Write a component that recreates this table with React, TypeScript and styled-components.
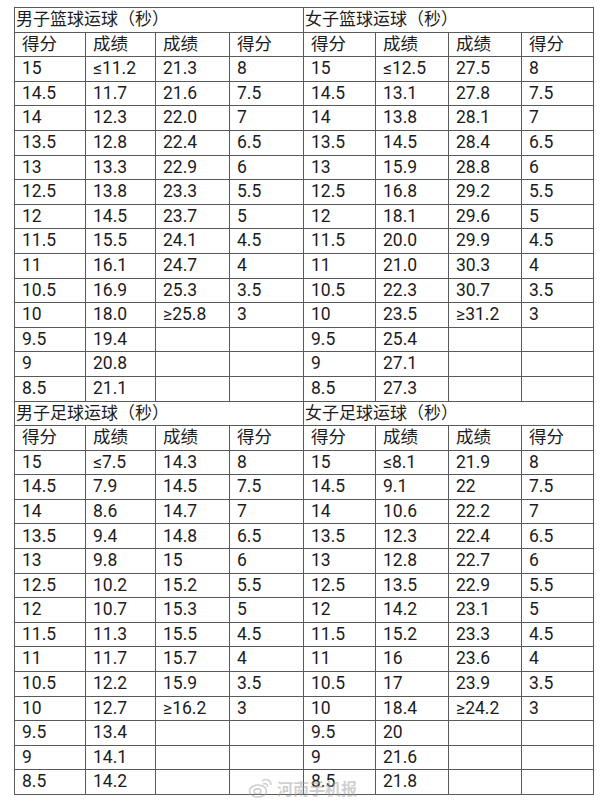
import * as React from "react";
import styled, { createGlobalStyle } from "styled-components";

const GlobalStyle = createGlobalStyle`
    html, body {
        margin: 0;
        padding: 0;
        background: #ffffff;
    }
    body {
        font-family: Roboto, "Noto Sans CJK SC", "Noto Sans", sans-serif;
        color: #1c1c1c;
    }
`;

const Page = styled.div`
    position: relative;
    width: 600px;
    height: 804px;
    padding: 7px 0 0 14px;
    box-sizing: border-box;
`;

const Table = styled.table`
    border-collapse: collapse;
    table-layout: fixed;
    width: 579px;
    border: 1px solid #7a7a7a;
`;

const Row = styled.tr`
    height: 24.6px;
`;

const Title = styled.td`
    border: 1px solid #5a5a5a;
    padding: 0 0 0 1px;
    font-size: 17px;
    line-height: 1;
    white-space: nowrap;
`;

const Cell = styled.td`
    border: 1px solid #5a5a5a;
    padding: 0 0 0 7px;
    font-size: 17.5px;
    line-height: 1;
    white-space: nowrap;
`;

const Watermark = styled.div`
    position: absolute;
    left: 248px;
    top: 776px;
    display: flex;
    align-items: center;
    gap: 3px;
    color: rgba(160, 160, 160, 0.5);
    font-size: 16px;
    font-weight: 700;
    pointer-events: none;
`;

type Section = {
    left: string;
    right: string;
    leftRows: string[][];
    rightRows: string[][];
};

const scores = ["15", "14.5", "14", "13.5", "13", "12.5", "12", "11.5", "11", "10.5", "10", "9.5", "9", "8.5"];
const lowScores = ["8", "7.5", "7", "6.5", "6", "5.5", "5", "4.5", "4", "3.5", "3"];

const build = (a: string[], b: string[]) =>
    scores.map((s, i) => [s, a[i], b[i] || "", lowScores[i] || ""]);

const sections: Section[] = [
    {
        left: "男子篮球运球（秒）",
        right: "女子篮球运球（秒）",
        leftRows: build(
            ["≤11.2", "11.7", "12.3", "12.8", "13.3", "13.8", "14.5", "15.5", "16.1", "16.9", "18.0", "19.4", "20.8", "21.1"],
            ["21.3", "21.6", "22.0", "22.4", "22.9", "23.3", "23.7", "24.1", "24.7", "25.3", "≥25.8"],
        ),
        rightRows: build(
            ["≤12.5", "13.1", "13.8", "14.5", "15.9", "16.8", "18.1", "20.0", "21.0", "22.3", "23.5", "25.4", "27.1", "27.3"],
            ["27.5", "27.8", "28.1", "28.4", "28.8", "29.2", "29.6", "29.9", "30.3", "30.7", "≥31.2"],
        ),
    },
    {
        left: "男子足球运球（秒）",
        right: "女子足球运球（秒）",
        leftRows: build(
            ["≤7.5", "7.9", "8.6", "9.4", "9.8", "10.2", "10.7", "11.3", "11.7", "12.2", "12.7", "13.4", "14.1", "14.2"],
            ["14.3", "14.5", "14.7", "14.8", "15", "15.2", "15.3", "15.5", "15.7", "15.9", "≥16.2"],
        ),
        rightRows: build(
            ["≤8.1", "9.1", "10.6", "12.3", "12.8", "13.5", "14.2", "15.2", "16", "17", "18.4", "20", "21.6", "21.8"],
            ["21.9", "22", "22.2", "22.4", "22.7", "22.9", "23.1", "23.3", "23.6", "23.9", "≥24.2"],
        ),
    },
];

const widths = [71, 70, 74, 74, 72, 73, 73, 72];
const header = ["得分", "成绩", "成绩", "得分"];

const WeiboLogo = () => (
    <svg width="26" height="22" viewBox="0 0 26 22" fill="none" stroke="currentColor" strokeWidth="1.6">
        <ellipse cx="10" cy="14" rx="8.5" ry="6" />
        <ellipse cx="9.5" cy="14.5" rx="3.5" ry="2.6" />
        <path d="M14 4 C18 1 23 3 23 8" />
        <path d="M15 7 C17 6 20 7 19.5 10" />
    </svg>
);

export default function App() {
    return (
        <Page>
            <GlobalStyle />
            <Table>
                <colgroup>
                    {widths.map((w, i) => (
                        <col key={i} style={{ width: w }} />
                    ))}
                </colgroup>
                <tbody>
                    {sections.map((sec) => (
                        <React.Fragment key={sec.left}>
                            <Row>
                                <Title colSpan={4}>{sec.left}</Title>
                                <Title colSpan={4}>{sec.right}</Title>
                            </Row>
                            <Row>
                                {[...header, ...header].map((h, i) => (
                                    <Cell key={i}>{h}</Cell>
                                ))}
                            </Row>
                            {sec.leftRows.map((r, i) => (
                                <Row key={i}>
                                    {[...r, ...sec.rightRows[i]].map((v, j) => (
                                        <Cell key={j}>{v}</Cell>
                                    ))}
                                </Row>
                            ))}
                        </React.Fragment>
                    ))}
                </tbody>
            </Table>
            <Watermark>
                <WeiboLogo />
                <span>河南手机报</span>
            </Watermark>
        </Page>
    );
}
